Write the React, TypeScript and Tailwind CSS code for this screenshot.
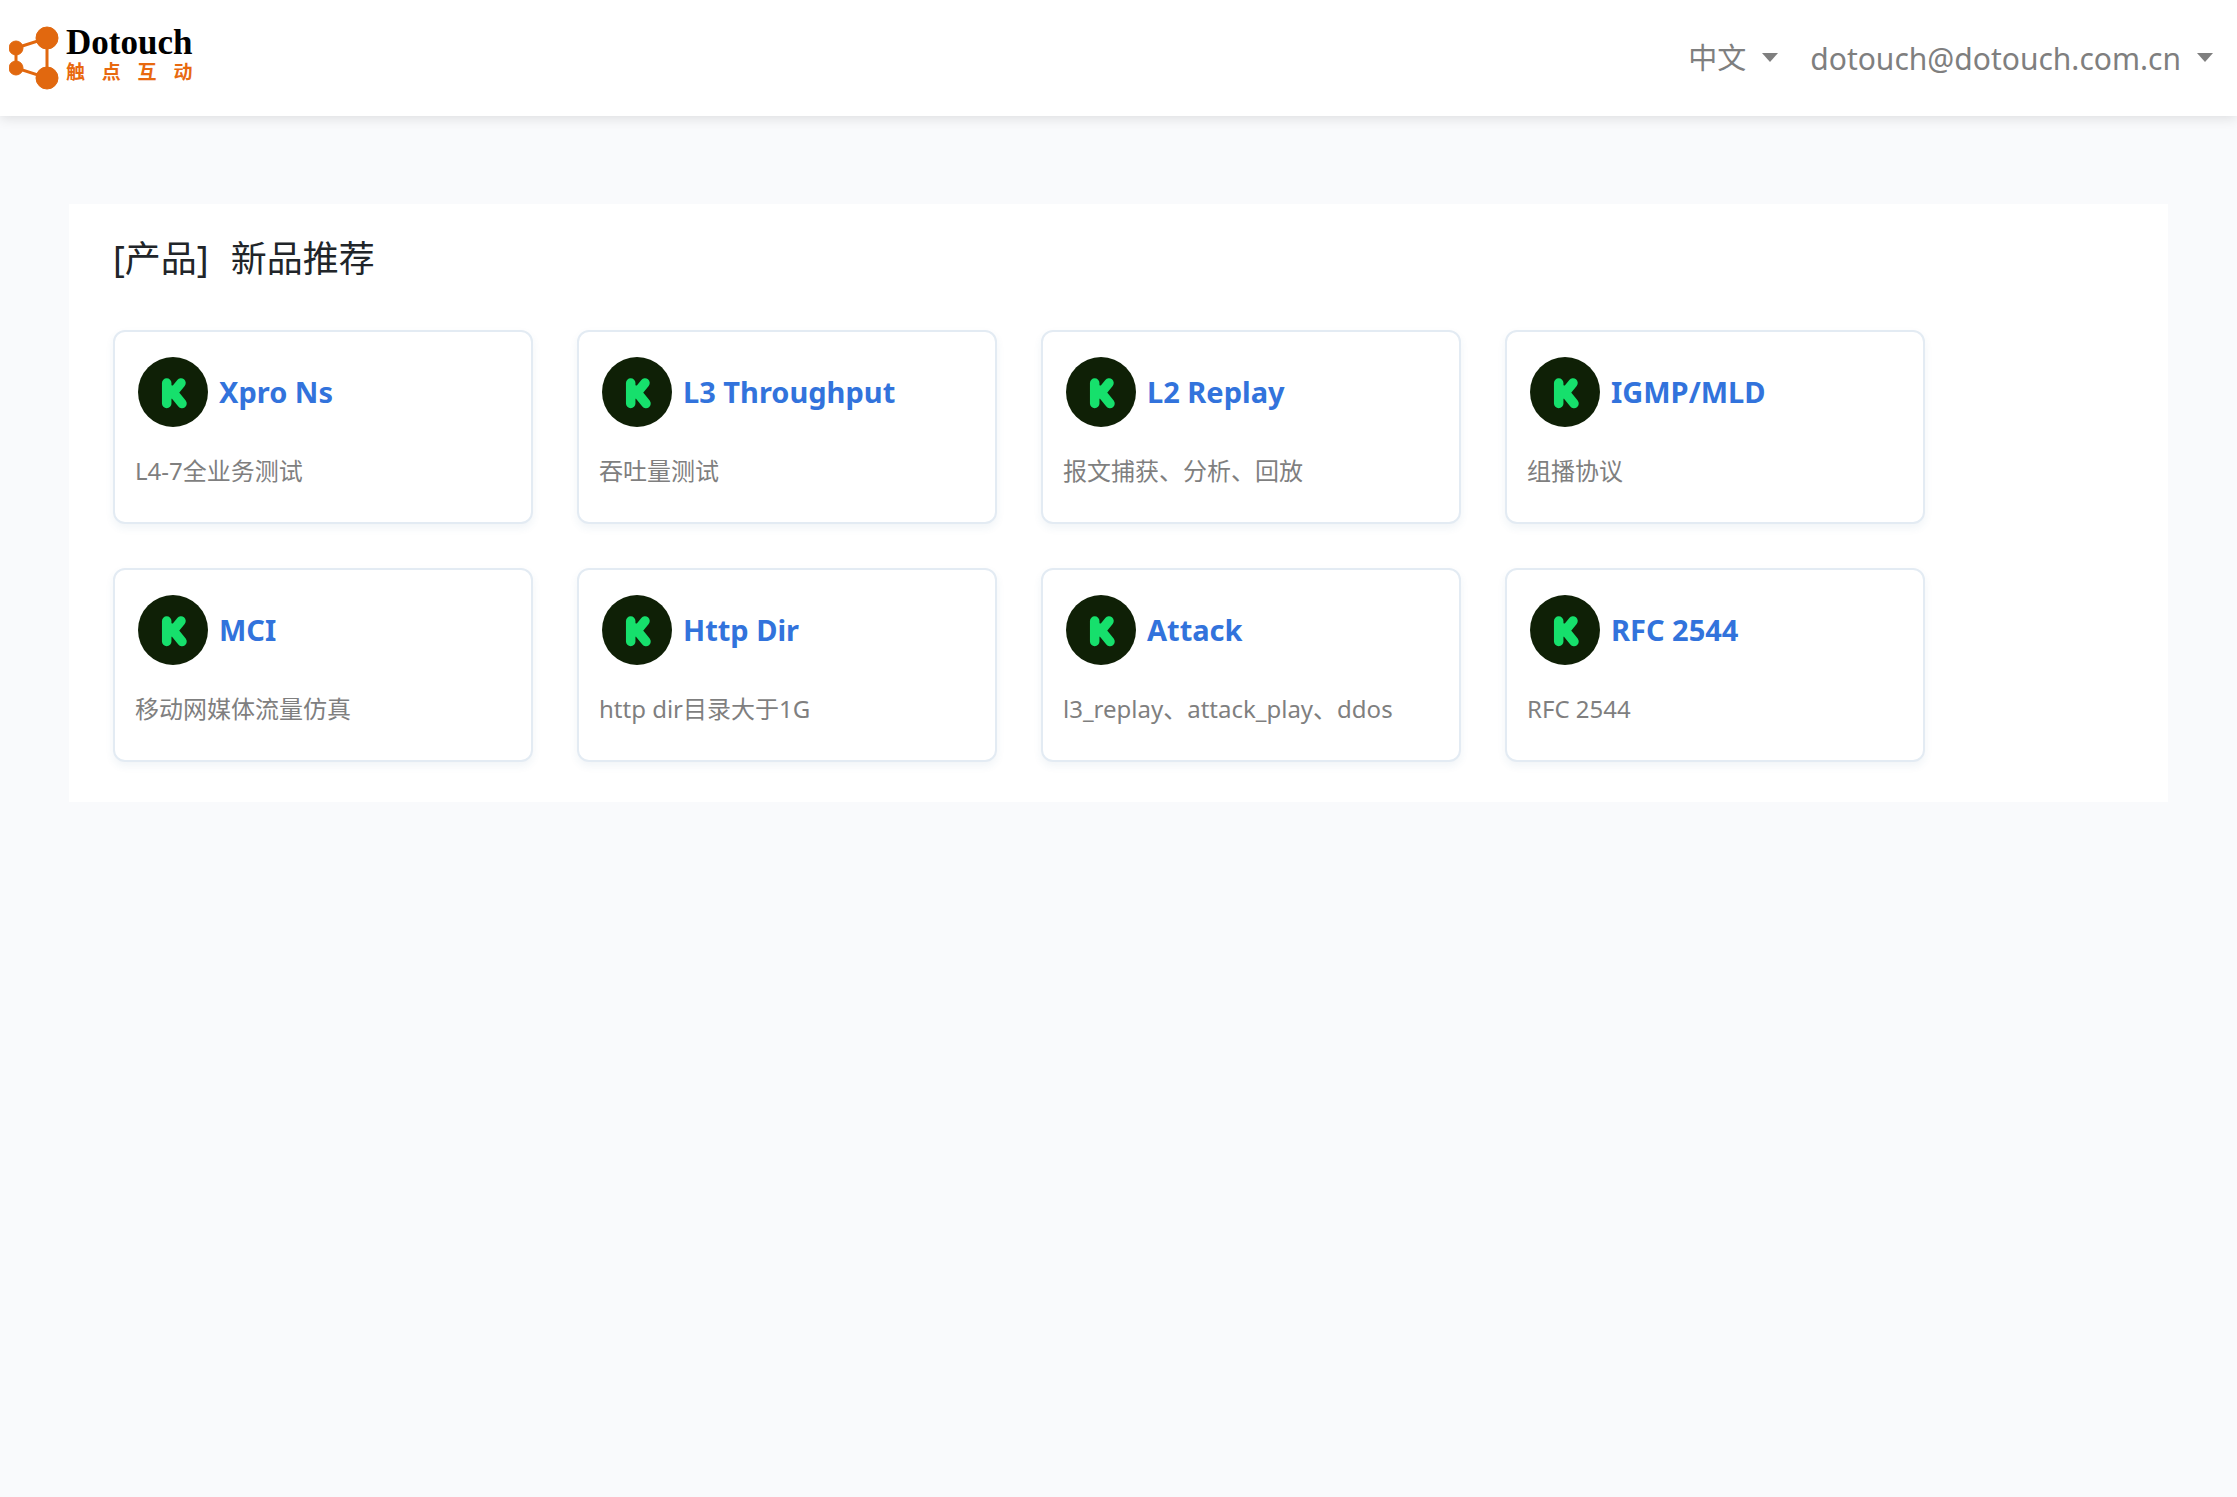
interface Product {
  name: string;
  desc: string;
}

const products: Product[] = [
  { name: "Xpro Ns", desc: "L4-7全业务测试" },
  { name: "L3 Throughput", desc: "吞吐量测试" },
  { name: "L2 Replay", desc: "报文捕获、分析、回放" },
  { name: "IGMP/MLD", desc: "组播协议" },
  { name: "MCI", desc: "移动网媒体流量仿真" },
  { name: "Http Dir", desc: "http dir目录大于1G" },
  { name: "Attack", desc: "l3_replay、attack_play、ddos" },
  { name: "RFC 2544", desc: "RFC 2544" },
];

function Caret() {
  return (
    <svg width="16" height="9" viewBox="0 0 16 9" className="mb-[2px] fill-[#7f7f7f]" aria-hidden="true">
      <path d="M0 0h16L8 9z" />
    </svg>
  );
}

function Logo() {
  return (
    <a href="#" className="flex items-center gap-[7px] text-black">
      <svg width="50" height="64" viewBox="0 0 50 64" aria-hidden="true">
        <g fill="#e1680f" stroke="#e1680f">
          <path d="M7 22 38 12V52L7 42Z" fill="none" strokeWidth="3" />
          <circle cx="38" cy="12" r="11" />
          <circle cx="38" cy="52" r="11" />
          <circle cx="7" cy="22" r="7" />
          <circle cx="7" cy="42" r="7" />
        </g>
      </svg>
      <div className="flex flex-col pb-[5px]">
        <span className="font-['Liberation_Serif',serif] text-[35px] leading-[32px] font-bold">Dotouch</span>
        <span className="flex justify-between text-[19px] leading-[26px] font-bold text-[#e8690f]">
          <span>触</span>
          <span>点</span>
          <span>互</span>
          <span>动</span>
        </span>
      </div>
    </a>
  );
}

function ProductIcon() {
  return (
    <svg width="70" height="70" viewBox="0 0 70 70" className="shrink-0" aria-hidden="true">
      <circle cx="35" cy="35" r="35" fill="#0f2006" />
      <path
        d="M28.700 26V46.500M43 26 34 37M33 33 44 46.500"
        fill="none"
        stroke="#16e06c"
        strokeWidth="9.500"
        strokeLinecap="round"
      />
    </svg>
  );
}

function ProductCard({ name, desc }: Product) {
  return (
    <div className="h-[194px] w-[420px] rounded-xl border-2 border-[#e3ebf3] bg-white px-5 pt-[25px] shadow-[0_4px_8px_rgba(44,95,140,0.07)]">
      <a href="#" className="flex items-center gap-[11px] pl-[3px] text-[#3273dc]">
        <ProductIcon />
        <span className="text-[29px] leading-[44px] font-bold">{name}</span>
      </a>
      <p className="mt-[26px] text-[24px] leading-[36px] text-[#7f7f7f]">{desc}</p>
    </div>
  );
}

export default function App() {
  return (
    <div className="min-h-screen bg-[#f9fafc] font-['Noto_Sans','Noto_Sans_CJK_SC',sans-serif]">
      {/* 顶部导航 */}
      <header className="flex h-[116px] items-center justify-between bg-white pr-6 pl-[9px] shadow-[0_2px_12px_rgba(0,0,0,0.12)]">
        <Logo />
        <nav className="flex items-center gap-8 text-[#7f7f7f]">
          <button className="flex items-center gap-4 text-[29px]">
            中文
            <Caret />
          </button>
          <button className="flex items-center gap-4 text-[30px]">
            dotouch@dotouch.com.cn
            <Caret />
          </button>
        </nav>
      </header>

      {/* 产品列表 */}
      <main className="mx-[69px] mt-[88px] bg-white px-11 pt-7 pb-10">
        <h1 className="flex gap-[22px] text-[36px] leading-[54px] text-[#212529]">
          <span>[产品]</span>
          <span>新品推荐</span>
        </h1>
        <div className="mt-11 flex flex-wrap gap-11">
          {products.map((p) => (
            <ProductCard key={p.name} name={p.name} desc={p.desc} />
          ))}
        </div>
      </main>
    </div>
  );
}
